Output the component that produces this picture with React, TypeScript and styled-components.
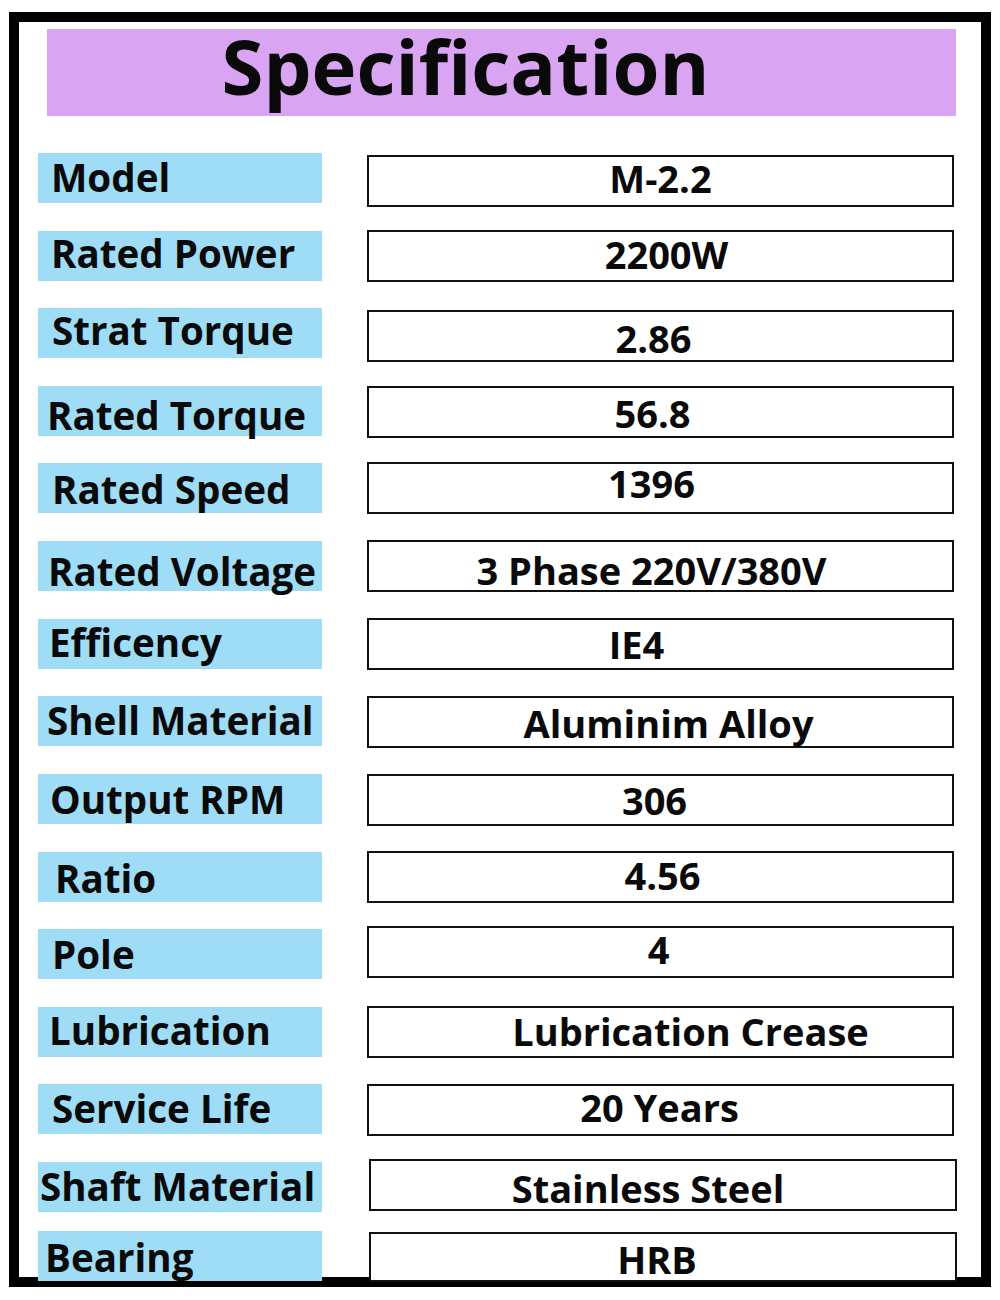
import styled, { createGlobalStyle } from "styled-components";

const GlobalStyle = createGlobalStyle`
  body {
    margin: 0;
    background: #ffffff;
    font-family: "Open Sans", "Noto Sans", "Liberation Sans", sans-serif;
  }
`;

const Frame = styled.div`
  box-sizing: border-box;
  width: 982px;
  height: 1275px;
  margin: 12px 0 0 9px;
  padding: 7px 0 0 19px;
  border: 10px solid #000;
  background: #fff;
`;

const TitleBar = styled.div`
  display: flex;
  align-items: center;
  justify-content: center;
  width: 909px;
  height: 87px;
  margin-left: 9px;
  padding: 0 72px 14px 0;
  box-sizing: border-box;
  background: #d9a4f1;
  color: #0a0a0a;
  font-size: 76px;
  font-weight: 700;
  line-height: 1;
`;

const List = styled.div`
  display: flex;
  flex-direction: column;
  margin-top: 37px;
`;

const Row = styled.div<{ $gap: number }>`
  display: grid;
  grid-template-columns: 284px 587px;
  column-gap: 45px;
  align-items: start;
  height: 50px;
  margin-top: ${(p) => p.$gap}px;
`;

const Label = styled.div<{ $top: number; $left: number; $dy: number }>`
  display: flex;
  align-items: center;
  box-sizing: border-box;
  height: 50px;
  margin-top: ${(p) => p.$top}px;
  padding-left: ${(p) => p.$left}px;
  padding-top: ${(p) => Math.max(0, p.$dy * 2)}px;
  padding-bottom: ${(p) => Math.max(0, -p.$dy * 2)}px;
  background: #9fdcf6;
  color: #0a0a0a;
  font-size: 38.6px;
  font-weight: 700;
  line-height: 1;
  white-space: nowrap;
`;

const Value = styled.div<{
  $top: number;
  $shift: number;
  $h: number;
  $dx: number;
  $dy: number;
}>`
  display: flex;
  align-items: center;
  justify-content: center;
  box-sizing: border-box;
  width: ${(p) => 587 + p.$shift / 2}px;
  height: ${(p) => p.$h}px;
  margin-top: ${(p) => p.$top}px;
  margin-left: ${(p) => p.$shift}px;
  padding-left: ${(p) => Math.max(0, p.$dx * 2)}px;
  padding-right: ${(p) => Math.max(0, -p.$dx * 2)}px;
  padding-top: ${(p) => Math.max(0, p.$dy * 2)}px;
  padding-bottom: ${(p) => Math.max(0, -p.$dy * 2)}px;
  border: 2px solid #111;
  background: #fff;
  color: #0a0a0a;
  font-size: 38px;
  font-weight: 700;
  line-height: 1;
  white-space: nowrap;
`;

type Spec = {
  name: string;
  value: string;
  gap: number;
  lt: number;
  lx: number;
  ldy: number;
  vt: number;
  vdx: number;
  vdy: number;
  shift?: number;
  h?: number;
};

const specs: Spec[] = [
  { name: "Model", value: "M-2.2", gap: 0, lt: 0, lx: 13, ldy: -1, vt: 2, vdx: 0, vdy: -3 },
  { name: "Rated Power", value: "2200W", gap: 27, lt: 1, lx: 13, ldy: -3, vt: 0, vdx: 6, vdy: -2 },
  { name: "Strat Torque", value: "2.86", gap: 28, lt: 0, lx: 14, ldy: -3, vt: 2, vdx: -7, vdy: 2 },
  { name: "Rated Torque", value: "56.8", gap: 28, lt: 0, lx: 9, ldy: 4, vt: 0, vdx: -8, vdy: 1 },
  { name: "Rated Speed", value: "1396", gap: 26, lt: 1, lx: 14, ldy: 1, vt: 0, vdx: -9, vdy: -5 },
  { name: "Rated Voltage", value: "3 Phase 220V/380V", gap: 28, lt: 1, lx: 10, ldy: 5, vt: 0, vdx: -9, vdy: 4 },
  { name: "Efficency", value: "IE4", gap: 28, lt: 1, lx: 11, ldy: -2, vt: 0, vdx: -24, vdy: 0 },
  { name: "Shell Material", value: "Aluminim Alloy", gap: 28, lt: 0, lx: 9, ldy: -1, vt: 0, vdx: 8, vdy: 1 },
  { name: "Output RPM", value: "306", gap: 28, lt: 0, lx: 12, ldy: 0, vt: 0, vdx: -6, vdy: 0 },
  { name: "Ratio", value: "4.56", gap: 27, lt: 1, lx: 17, ldy: 1, vt: 0, vdx: 2, vdy: -2 },
  { name: "Pole", value: "4", gap: 25, lt: 3, lx: 14, ldy: 0, vt: 0, vdx: -2, vdy: -3 },
  { name: "Lubrication", value: "Lubrication Crease", gap: 30, lt: 1, lx: 11, ldy: -2, vt: 0, vdx: 30, vdy: -1 },
  { name: "Service Life", value: "20 Years", gap: 28, lt: 0, lx: 14, ldy: -1, vt: 0, vdx: -1, vdy: -3 },
  { name: "Shaft Material", value: "Stainless Steel", gap: 25, lt: 3, lx: 2, ldy: -1, vt: 0, vdx: -15, vdy: 3, shift: 2 },
  { name: "Bearing", value: "HRB", gap: 22, lt: 0, lx: 7, ldy: 1, vt: 1, vdx: -6, vdy: 2, shift: 2, h: 50 },
];

export default function App() {
  return (
    <>
      <GlobalStyle />
      <Frame>
        <TitleBar>Specification</TitleBar>
        <List>
          {specs.map((s) => (
            <Row key={s.name} $gap={s.gap}>
              <Label $top={s.lt} $left={s.lx} $dy={s.ldy}>
                {s.name}
              </Label>
              <Value
                $top={s.vt}
                $shift={s.shift ?? 0}
                $h={s.h ?? 52}
                $dx={s.vdx}
                $dy={s.vdy}
              >
                {s.value}
              </Value>
            </Row>
          ))}
        </List>
      </Frame>
    </>
  );
}
